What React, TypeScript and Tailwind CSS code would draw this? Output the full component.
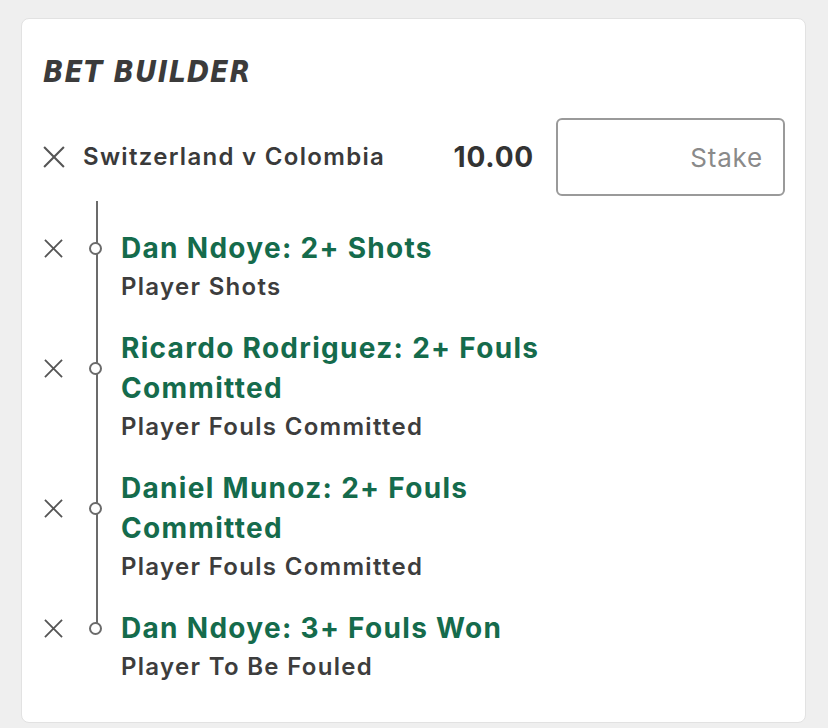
import React from "react";

const items = [
  { title: ["Dan Ndoye: 2+ Shots"], sub: "Player Shots" },
  { title: ["Ricardo Rodriguez: 2+ Fouls", "Committed"], sub: "Player Fouls Committed" },
  { title: ["Daniel Munoz: 2+ Fouls", "Committed"], sub: "Player Fouls Committed" },
  { title: ["Dan Ndoye: 3+ Fouls Won"], sub: "Player To Be Fouled" },
];

function Cross({ size }: { size: number }) {
  return (
    <svg width={size} height={size} viewBox="0 0 20 20" fill="none">
      <path d="M1 1L19 19M19 1L1 19" stroke="#555555" strokeWidth="1.9" strokeLinecap="butt" />
    </svg>
  );
}

export default function App() {
  return (
    <div
      className="min-h-[728px] bg-[#efefef] pt-[18px] pl-[21px] pr-[22px]"
      style={{ fontFamily: "Inter, 'Noto Sans', sans-serif" }}
    >
      <div className="h-[705px] rounded-lg border border-[#e2e2e2] bg-white pl-[21px] pr-[20px] pt-[38px]">
        <h1
          className="text-[30px] leading-[30px] font-bold italic tracking-[0.9px] text-[#3b3b3b]"
          style={{ fontFamily: "'DejaVu Sans Condensed', 'DejaVu Sans', sans-serif", fontStretch: "condensed" }}
        >
          BET BUILDER
        </h1>

        <div className="mt-[31px] flex items-center">
          <div className="flex w-[40px] items-center">
            <Cross size={22} />
          </div>
          <div className="flex-1 text-[24px] tracking-[1.3px] font-semibold text-[#3a3a3a]">Switzerland v Colombia</div>
          <div className="mr-[22px] text-[28px] tracking-[0.8px] font-bold text-[#333333]">10.00</div>
          <div className="flex h-[78px] w-[229px] items-center justify-end rounded-[6px] border-2 border-[#9a9a9a] pr-[20px] text-[26px] tracking-[0.8px] text-[#8a8a8a]">
            Stake
          </div>
        </div>

        <div className="relative mt-[5px] pt-[27px]">
          <div className="absolute left-[53px] top-0 bottom-[58px] w-[2px] bg-[#6b6b6b]" />
          {items.map((it, i) => (
            <div key={i} className="mb-[22px]">
              <div className="flex items-center">
                <div className="flex w-[48px] items-center pl-[1px]">
                  <Cross size={19} />
                </div>
                <div className="relative flex w-[30px] items-center">
                  <div className="ml-[-2px] h-[13px] w-[13px] rounded-full border-2 border-[#6b6b6b] bg-white" />
                </div>
                <div className="text-[28px] leading-[40px] tracking-[1.3px] font-bold text-[#156b4c]">
                  {it.title.map((t, j) => (
                    <div key={j}>{t}</div>
                  ))}
                </div>
              </div>
              <div className="pl-[78px] text-[24px] leading-[38px] tracking-[1.3px] font-semibold text-[#3d3d3d]">{it.sub}</div>
            </div>
          ))}
        </div>
      </div>
    </div>
  );
}
